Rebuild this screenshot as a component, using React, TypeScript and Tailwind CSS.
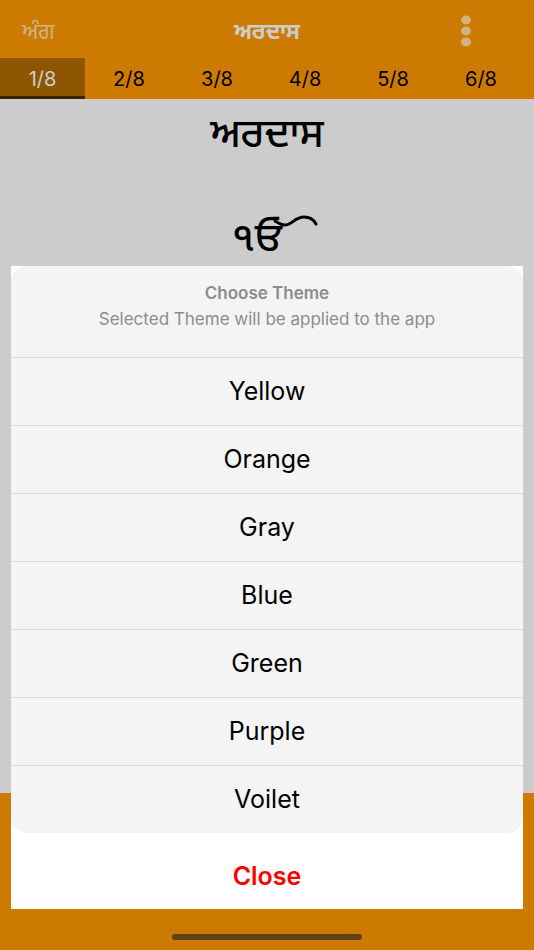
import { useState } from "react";
import clsx from "clsx";

const TABS = ["1/8", "2/8", "3/8", "4/8", "5/8", "6/8"];
const THEMES = ["Yellow", "Orange", "Gray", "Blue", "Green", "Purple", "Voilet"];

function Header() {
    return (
        <header className="grid h-[58px] grid-cols-3 items-center px-[22px] pt-1">
            <button className="justify-self-start text-[22px] text-[#d1b282]">ਅੰਗ</button>
            <h1 className="justify-self-center text-[22px] font-bold text-[#cccccc]">ਅਰਦਾਸ</h1>
            <button aria-label="More" className="mr-10 justify-self-end">
                <svg width="12" height="32" viewBox="0 0 12 32" fill="#d1b282">
                    <ellipse cx="6" cy="5" rx="5" ry="4.4" />
                    <ellipse cx="6" cy="16" rx="5" ry="4.4" />
                    <ellipse cx="6" cy="27" rx="5" ry="4.4" />
                </svg>
            </button>
        </header>
    );
}

function TabBar({ active, onSelect }: { active: string; onSelect: (tab: string) => void }) {
    return (
        <nav className="flex h-[41px] overflow-hidden">
            {TABS.map((tab) => (
                <button
                    key={tab}
                    onClick={() => onSelect(tab)}
                    className={clsx(
                        "shrink-0 border-b-3 pt-1 text-xl leading-none first:w-[85px] w-[88px]",
                        tab === active
                            ? "border-[#3d2400] bg-[#8f5600] text-[#cccccc]"
                            : "border-transparent text-black"
                    )}
                >
                    {tab}
                </button>
            ))}
        </nav>
    );
}

function ThemeSheet({ onClose }: { onClose: () => void }) {
    return (
        <section
            role="dialog"
            aria-labelledby="sheet-title"
            className="absolute inset-x-[11px] bottom-[41px] bg-white text-center"
        >
            <div className="overflow-hidden rounded-2xl bg-[#f4f4f4]">
                <div className="h-[91px] pt-4 text-[17px] text-[#8c8c8c]">
                    <h2 id="sheet-title" className="font-semibold leading-[22px]">Choose Theme</h2>
                    <p className="mt-1 leading-[22px]">Selected Theme will be applied to the app</p>
                </div>
                {THEMES.map((theme) => (
                    <button
                        key={theme}
                        onClick={onClose}
                        className="block h-[68px] w-full border-t border-[#d8d8d8] text-[25px] text-black"
                    >
                        {theme}
                    </button>
                ))}
            </div>
            <button onClick={onClose} className="h-[76px] w-full pt-3 text-[25px] font-semibold text-[#ff0000]">
                Close
            </button>
        </section>
    );
}

export default function App() {
    const [tab, setTab] = useState("1/8");
    const [open, setOpen] = useState(true);

    return (
        <div className="relative flex min-h-screen flex-col overflow-hidden bg-[#cc7a00] font-['Inter','Noto_Sans_Gurmukhi','Noto_Sans',sans-serif]">
            <Header />
            <TabBar active={tab} onSelect={setTab} />
            <main className="flex flex-1 flex-col items-center bg-[#cccccc] pt-[10px] text-black">
                <h2 className="text-[40px] font-medium leading-[48px]">ਅਰਦਾਸ</h2>
                <p className="mt-12 ml-4 flex items-start text-[40px] font-medium leading-[64px]">
                    ੧ਓ
                    {/* long flourish that continues the open top of the oora */}
                    <svg className="mt-2 -ml-3" width="48" height="20" viewBox="0 0 48 20" fill="none" stroke="currentColor" strokeWidth="3" strokeLinecap="round">
                        <path d="M5 8C8 10 11 12 15 12C22 12 25 4 34 4C40 4 44 7 46 11" />
                    </svg>
                </p>
            </main>
            <footer className="flex h-[157px] items-end justify-center pb-[10px]">
                <div className="h-[6px] w-[190px] rounded-full bg-[#5f4018]" />
            </footer>
            {open && <ThemeSheet onClose={() => setOpen(false)} />}
        </div>
    );
}
